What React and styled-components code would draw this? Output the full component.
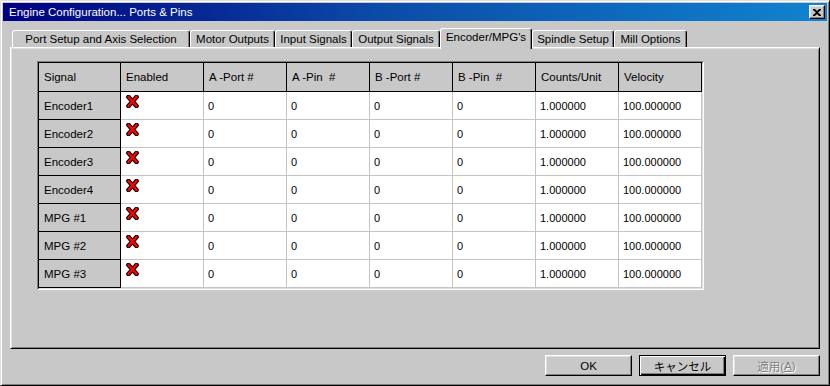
import React from "react";
import styled, { createGlobalStyle } from "styled-components";

const Global = createGlobalStyle`
  html, body { margin: 0; padding: 0; background: #c8c8c8; overflow: hidden; }
  body { font-family: "Liberation Sans", Arial, "Noto Sans CJK JP", sans-serif; }
`;

const Window = styled.div`
  width: 830px;
  height: 386px;
  box-sizing: border-box;
  background: #c8c8c8;
  border: 1px solid;
  border-color: #dfdfdf #000 #000 #dfdfdf;
  box-shadow: inset 1px 1px #fff, inset -1px -1px #808080;
  padding: 2px;
  display: flex;
  flex-direction: column;
`;

const TitleBar = styled.div`
  height: 18px;
  flex: none;
  display: flex;
  align-items: center;
  justify-content: space-between;
  background: linear-gradient(90deg, #000080 0%, #0b4aa8 45%, #1084d0 100%);
  padding: 0 2px 0 6px;
  color: #fff;
  font-size: 11.5px;
`;

const TitleText = styled.span`
  white-space: nowrap;
  line-height: 18px;
`;

const CloseButton = styled.div`
  width: 16px;
  height: 14px;
  box-sizing: border-box;
  background: #c8c8c8;
  border: 1px solid;
  border-color: #fff #000 #000 #fff;
  box-shadow: inset -1px -1px #808080, inset 1px 1px #dfdfdf;
  display: flex;
  align-items: center;
  justify-content: center;
`;

const Body = styled.div`
  flex: 1;
  display: flex;
  flex-direction: column;
  padding: 7px 7px 0 7px;
`;

const TabStrip = styled.div`
  display: flex;
  align-items: flex-end;
  height: 21px;
  margin: 0 0 -2px 2px;
  position: relative;
  z-index: 2;
`;

const Tab = styled.div`
  box-sizing: border-box;
  width: ${(p) => p.$w}px;
  height: ${(p) => (p.$active ? 21 : 17)}px;
  margin-bottom: ${(p) => (p.$active ? 0 : 2)}px;
  background: #c8c8c8;
  border-style: solid;
  border-width: 1px 1px 0 1px;
  border-color: #fff #000 transparent #fff;
  border-radius: 3px 3px 0 0;
  box-shadow: inset -1px 0 #808080;
  font-size: 11.5px;
  color: #000;
  display: flex;
  align-items: ${(p) => (p.$active ? "flex-start" : "center")};
  padding-top: ${(p) => (p.$active ? 2 : 0)}px;
  justify-content: center;
  white-space: nowrap;
`;

const Panel = styled.div`
  box-sizing: border-box;
  height: 302px;
  border: 1px solid;
  border-color: #fff #000 #000 #fff;
  box-shadow: inset 1px 1px #dfdfdf, inset -1px -1px #808080;
  padding: 13px 0 0 26px;
  position: relative;
  z-index: 1;
`;

const TableFrame = styled.div`
  display: inline-block;
  border: 1px solid;
  border-color: #808080 #fff #fff #808080;
`;

const Grid = styled.div`
  display: grid;
  grid-template-columns: 82px repeat(7, 83px);
  grid-template-rows: 29px repeat(7, 28px);
  border: 1px solid;
  border-color: #000 #dfdfdf #dfdfdf #000;
  background: #fff;
`;

const HeadCell = styled.div`
  box-sizing: border-box;
  background: #c8c8c8;
  border-right: 1px solid #000;
  border-bottom: 1px solid #000;
  display: flex;
  align-items: center;
  padding-left: 5px;
  font-size: 11.5px;
  color: #000;
  white-space: pre;
`;

const DataCell = styled.div`
  box-sizing: border-box;
  background: #fff;
  border-right: 1px solid #c4c4c4;
  border-bottom: 1px solid #c4c4c4;
  display: flex;
  align-items: ${(p) => (p.$icon ? "flex-start" : "center")};
  padding: ${(p) => (p.$icon ? "3px 0 0 5px" : "0 0 0 4px")};
  font-size: 11px;
  color: #000;
  white-space: nowrap;
`;

const ButtonRow = styled.div`
  display: flex;
  justify-content: flex-end;
  gap: 7px;
  margin-top: 6px;
`;

const Button = styled.div`
  box-sizing: border-box;
  width: 87px;
  height: 21px;
  background: #c8c8c8;
  border: 1px solid;
  border-color: ${(p) => (p.$default ? "#000" : "#fff #000 #000 #fff")};
  box-shadow: ${(p) =>
    p.$default
      ? "inset 1px 1px #fff, inset -1px -1px #000, inset -2px -2px #808080"
      : "inset -1px -1px #808080, inset 1px 1px #dfdfdf"};
  display: flex;
  align-items: center;
  justify-content: center;
  font-family: "Liberation Sans", "Noto Sans CJK JP", sans-serif;
  font-size: 11.5px;
  color: ${(p) => (p.$disabled ? "#808080" : "#000")};
  text-shadow: ${(p) => (p.$disabled ? "1px 1px #fff" : "none")};
`;

const Underline = styled.span`
  text-decoration: underline;
`;

const CloseGlyph = () => (
  <svg width="8" height="7" viewBox="0 0 8 7">
    <path d="M0 0h2l2 2 2-2h2v1L5 3.5 8 6v1H6L4 5 2 7H0V6l3-2.5L0 1z" fill="#000" />
  </svg>
);

const RedX = () => (
  <svg width="13" height="13" viewBox="0 0 13 13">
    <path d="M2.5 2 L10.5 11 M10.5 2 L2.5 11" stroke="#000" strokeWidth="4.6" strokeLinecap="round" />
    <path d="M2.5 2 L10.5 11 M10.5 2 L2.5 11" stroke="#ff0000" strokeWidth="2.6" strokeLinecap="round" />
  </svg>
);

const tabs = [
  { label: "Port Setup and Axis Selection", w: 178 },
  { label: "Motor Outputs", w: 85 },
  { label: "Input Signals", w: 77 },
  { label: "Output Signals", w: 88 },
  { label: "Encoder/MPG's", w: 92, active: true },
  { label: "Spindle Setup", w: 82 },
  { label: "Mill Options", w: 73 },
];

const headers = ["Signal", "Enabled", "A -Port #", "A -Pin  #", "B -Port #", "B -Pin  #", "Counts/Unit", "Velocity"];
const signals = ["Encoder1", "Encoder2", "Encoder3", "Encoder4", "MPG #1", "MPG #2", "MPG #3"];

export default function App() {
  return (
    <>
      <Global />
      <Window>
        <TitleBar>
          <TitleText>Engine Configuration... Ports &amp; Pins</TitleText>
          <CloseButton>
            <CloseGlyph />
          </CloseButton>
        </TitleBar>
        <Body>
          <TabStrip>
            {tabs.map((t) => (
              <Tab key={t.label} $w={t.w} $active={t.active}>
                {t.label}
              </Tab>
            ))}
          </TabStrip>
          <Panel>
            <TableFrame>
              <Grid>
                {headers.map((h) => (
                  <HeadCell key={h}>{h}</HeadCell>
                ))}
                {signals.map((s) => (
                  <React.Fragment key={s}>
                    <HeadCell>{s}</HeadCell>
                    <DataCell $icon>
                      <RedX />
                    </DataCell>
                    <DataCell>0</DataCell>
                    <DataCell>0</DataCell>
                    <DataCell>0</DataCell>
                    <DataCell>0</DataCell>
                    <DataCell>1.000000</DataCell>
                    <DataCell>100.000000</DataCell>
                  </React.Fragment>
                ))}
              </Grid>
            </TableFrame>
          </Panel>
          <ButtonRow>
            <Button>OK</Button>
            <Button $default>キャンセル</Button>
            <Button $disabled>
              適用(<Underline>A</Underline>)
            </Button>
          </ButtonRow>
        </Body>
      </Window>
    </>
  );
}
